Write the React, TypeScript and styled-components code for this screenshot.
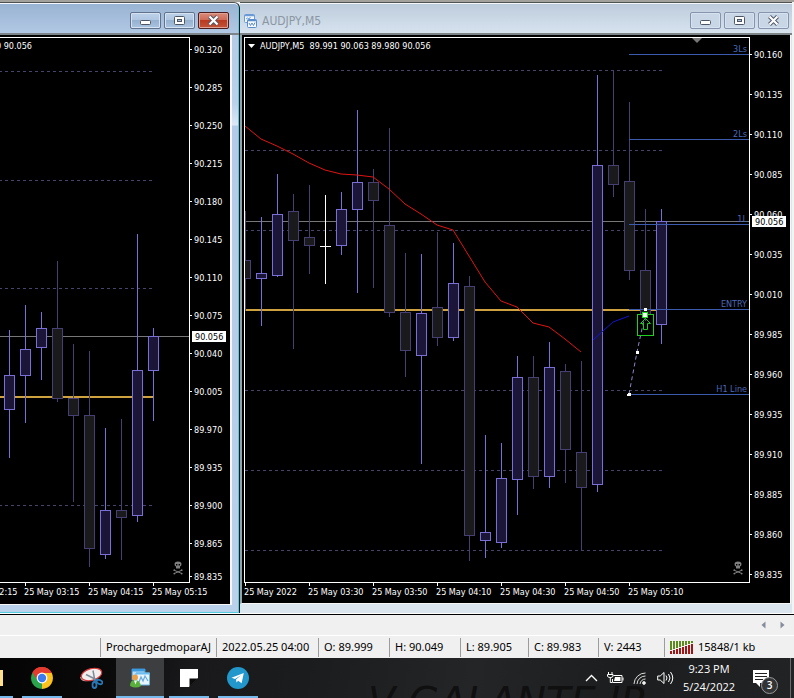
import React from 'react';
import styled, { createGlobalStyle } from 'styled-components';

const uiFont = '"DejaVu Sans Condensed", "DejaVu Sans", sans-serif';
const shellFont = '"Open Sans", "Noto Sans", sans-serif';

const GlobalStyle = createGlobalStyle`
  *, *::before, *::after { box-sizing: border-box; }
  html, body, #root { margin: 0; height: 100%; }
  body { background: #f0f0f0; font-family: ${uiFont}; overflow: hidden; }
  button { padding: 0; margin: 0; border: 0; background: none; font: inherit; color: inherit; }
`;

/* ---------- shell ---------- */

const Page = styled.div`
  display: flex;
  flex-direction: column;
  min-height: 100%;
`;

const Workspace = styled.main`
  display: flex;
  align-items: stretch;
  overflow: hidden;
  background: #f4f4f4;
  border-top: 2px solid #a3a19b;
  padding-right: 2px;
`;

const WindowFrame = styled.section<{ $active?: boolean }>`
  display: flex;
  flex-direction: column;
  min-width: 0;
  flex: ${p => (p.$active ? '0 0 auto' : '1 1 0')};
  background: ${p =>
    p.$active
      ? 'linear-gradient(#98b3d2 0, #b5cbe6 34px, #b9d1ea 100px, #dbe8f8 122px, #b3cbe8 123px, #b9d1ea 100%)'
      : 'linear-gradient(#bccbdb 0, #d9e4f0 32px, #dbe5ee 100%)'};
  border-top: 1px solid #4f5453;
  border-right: ${p => (p.$active ? '1px solid #101c20' : '0')};
  border-bottom: 1px solid ${p => (p.$active ? '#101010' : '#5b6468')};
  border-radius: ${p => (p.$active ? '0 6px 0 0' : '0')};
  box-shadow: ${p => (p.$active ? 'inset -1px -1px 0 #55cbe0, inset 0 1px 0 #f4f8fc' : 'inset 0 1px 0 #f4f8fc')};
`;

const TitleBar = styled.header<{ $active?: boolean }>`
  display: flex;
  align-items: center;
  gap: 2px;
  height: 32px;
  padding: ${p => (p.$active ? '5px 10px 0 0' : '5px 3px 0 4px')};
  border-bottom: 2px solid #7d8488;
`;

const WindowTitle = styled.h2`
  flex: 1;
  margin: 0 0 0 3px;
  font: 400 12px/16px ${uiFont};
  color: #8c97a3;
`;

const Caption = styled.button<{ $kind: 'active' | 'close' | 'idle' }>`
  display: grid;
  place-items: center;
  width: 31px;
  height: 17px;
  border-radius: 2px;
  border: 1px solid ${p => (p.$kind === 'close' ? '#4b1c1c' : p.$kind === 'active' ? '#61728c' : '#8793aa')};
  box-shadow: inset 0 0 0 1px ${p => (p.$kind === 'close' ? '#e0a295' : '#d5e2f1')};
  background: ${p =>
    p.$kind === 'close'
      ? 'linear-gradient(#d98b7a 0, #cf6b56 45%, #b93a20 50%, #c2553a 100%)'
      : p.$kind === 'active'
        ? 'linear-gradient(#bdd0e8 0, #b0c7e2 45%, #97b1d0 50%, #a9c3e0 100%)'
        : '#c9d6e6'};
`;

const CaptionGroup = styled.div`
  display: flex;
  gap: 3px;
  margin-left: auto;
`;

const Client = styled.div<{ $active?: boolean }>`
  display: flex;
  flex: 1;
  overflow: hidden;
  background: #000;
  border-bottom: 1px solid #f6f6f6;
  border-right: ${p => (p.$active ? '2px' : '1px')} solid #f6f6f6;
  border-left: ${p => (p.$active ? '0' : '2px solid #93a3a5')};
  margin: ${p => (p.$active ? '0 7px 8px 0' : '0 1px 9px 0')};
`;

const ChartSvg = styled.svg`
  display: block;
  flex: none;
  shape-rendering: crispEdges;
  text { font-family: ${uiFont}; font-size: 9px; fill: #fff; }
`;

/* ---------- chart ---------- */

type Candle = [x: number, high: number, top: number, bottom: number, low: number, up: 0 | 1];

function Candles({ data }: { data: Candle[] }) {
  return (
    <>
      {data.map(([x, high, top, bottom, low, up]) => {
        const line = up ? '#7a6fd6' : '#453f73';
        return (
          <g key={x}>
            <rect x={x} y={high} width={1} height={low + 1 - high} fill={line} />
            <rect x={x - 4.5} y={top + 0.5} width={10} height={bottom - top} fill={up ? '#1b1638' : '#1a1a1c'} stroke={line} />
          </g>
        );
      })}
    </>
  );
}

function Frame(p: { left: number; right: number; prices: [string, number][]; times: [string, number][]; ticks: number[]; gridEnd: number; grid: number[] }) {
  return (
    <>
      {p.grid.map(y => (
        <line key={y} x1={p.left + 1} x2={p.gridEnd} y1={y + 0.5} y2={y + 0.5} stroke="#45456a" strokeDasharray="3 3" />
      ))}
      <path d={`M${p.left + 0.5} 37.5H${p.right + 0.5}V582.5H${p.left + 0.5}Z`} fill="none" stroke="#fff" />
      {p.prices.map(([label, y]) => (
        <g key={label}>
          <line x1={p.right} x2={p.right + 3} y1={y + 0.5} y2={y + 0.5} stroke="#fff" />
          <text x={p.right + 5} y={y + 4}>{label}</text>
        </g>
      ))}
      {p.ticks.map(x => (
        <line key={x} x1={x + 0.5} x2={x + 0.5} y1={582} y2={586} stroke="#fff" />
      ))}
      {p.times.map(([label, x]) => (
        <text key={label} x={x} y={595}>{label}</text>
      ))}
    </>
  );
}

function CurrentPrice({ x, y }: { x: number; y: number }) {
  return (
    <g>
      <rect x={x} y={y - 5} width={34} height={11} fill="#fff" />
      <text x={x + 3} y={y + 4} style={{ fill: '#000' }}>90.056</text>
    </g>
  );
}

function Skull({ x, y }: { x: number; y: number }) {
  return (
    <g transform={`translate(${x} ${y})`} shapeRendering="auto" fill="#808080" stroke="none">
      <path d="M-3.500 -5Q-3.500 -7.500 0 -7.500T3.500 -5Q3.500 -3 2 -2.500V-.5H-2V-2.500Q-3.500 -3 -3.500 -5Z" />
      <path d="M-2 -5h1.400v1.400H-2zM.6 -5H2v1.400H.6z" fill="#000" />
      <path d="M-4 1.200L4 4.600M4 1.200L-4 4.600" stroke="#808080" strokeWidth="1" />
      <circle cx="-3.700" cy="1.200" r=".9" /><circle cx="3.700" cy="1.200" r=".9" />
      <circle cx="-3.700" cy="4.600" r=".9" /><circle cx="3.700" cy="4.600" r=".9" />
    </g>
  );
}

const leftCandles: Candle[] = [
  [9, 330, 375, 409, 457, 1], [25, 305, 349, 375, 422, 1], [41, 312, 328, 347, 379, 1],
  [57, 261, 328, 398, 401, 0], [73, 344, 398, 415, 501, 0], [89, 351, 415, 548, 566, 0],
  [105, 428, 510, 554, 558, 1], [121, 419, 510, 517, 559, 0], [137, 234, 370, 515, 521, 1],
  [153, 328, 336, 370, 420, 1],
];
const leftPrices: [string, number][] = [
  ['90.320', 49], ['90.285', 87], ['90.250', 125], ['90.215', 163], ['90.180', 201],
  ['90.145', 239], ['90.110', 277], ['90.075', 315], ['90.040', 353], ['90.005', 391],
  ['89.970', 429], ['89.935', 467], ['89.900', 505], ['89.865', 543], ['89.835', 576],
];

const rightCandles: Candle[] = [
  [245, 211, 260, 278, 310, 0], [261, 217, 273, 278, 325, 1], [277, 174, 214, 275, 276, 1],
  [293, 194, 211, 240, 348, 0], [309, 185, 237, 245, 273, 0],
  [341, 192, 209, 245, 254, 1], [357, 110, 182, 209, 292, 1], [373, 169, 182, 200, 287, 0],
  [389, 128, 225, 312, 316, 0], [405, 253, 312, 350, 376, 0], [421, 254, 313, 355, 463, 1],
  [437, 232, 307, 337, 345, 0], [453, 243, 283, 337, 340, 1], [469, 276, 286, 535, 560, 0],
  [485, 435, 532, 540, 557, 1], [501, 443, 478, 542, 547, 1], [517, 356, 377, 479, 514, 1],
  [533, 356, 377, 476, 488, 0], [549, 342, 367, 476, 487, 1], [565, 364, 371, 449, 482, 0],
  [581, 361, 452, 487, 549, 0], [597, 75, 165, 484, 491, 1], [613, 70, 165, 184, 196, 0],
  [629, 102, 181, 270, 279, 0], [645, 209, 270, 314, 320, 0], [661, 209, 221, 324, 343, 1],
];
const rightPrices: [string, number][] = [
  ['90.160', 54], ['90.135', 94], ['90.110', 134], ['90.085', 174], ['90.060', 214],
  ['90.035', 254], ['90.010', 294], ['89.985', 334], ['89.960', 374], ['89.935', 414],
  ['89.910', 454], ['89.885', 494], ['89.860', 534], ['89.835', 574],
];
const levels: [string, number][] = [['3Ls', 54], ['2Ls', 139], ['1L', 224], ['ENTRY', 309], ['H1 Line', 394]];

function LeftChart() {
  return (
    <ChartSvg width={230} height={568} viewBox="0 35 230 568" role="img" aria-label="Price chart">
      <Frame left={-20} right={189} prices={leftPrices} gridEnd={154} grid={[71, 180, 288, 505]}
        ticks={[25, 89, 153]}
        times={[['25 May 02:15', -38], ['25 May 03:15', 24], ['25 May 04:15', 88], ['25 May 05:15', 152]]} />
      <text x={32} y={49} textAnchor="end">AUDJPY,M15  89.991 90.063 89.980 90.056</text>
      <line x1={0} x2={189} y1={336.5} y2={336.5} stroke="#777" />
      <rect x={0} y={396} width={153} height={2} fill="#cfa240" />
      <Candles data={leftCandles} />
      <CurrentPrice x={192} y={336} />
      <Skull x={178} y={569} />
    </ChartSvg>
  );
}

function RightChart() {
  return (
    <ChartSvg width={548} height={568} viewBox="242 35 548 568" role="img" aria-label="AUDJPY,M5 price chart">
      <clipPath id="plot"><rect x={245} y={38} width={504} height={544} /></clipPath>
      <Frame left={244} right={749} prices={rightPrices} gridEnd={662} grid={[70, 150, 230, 390, 470, 550]}
        ticks={[245, 309, 373, 437, 501, 565, 629]}
        times={[['25 May 2022', 244], ['25 May 03:30', 308], ['25 May 03:50', 372], ['25 May 04:10', 436], ['25 May 04:30', 500], ['25 May 04:50', 564], ['25 May 05:10', 628]]} />
      <path d="M248 44h7l-3.500 4z" fill="#fff" shapeRendering="auto" />
      <text x={260} y={49} style={{ whiteSpace: 'pre' }}>AUDJPY,M5  89.991 90.063 89.980 90.056</text>
      <path d="M692 38h10l-5 5z" fill="#777" shapeRendering="auto" />
      <line x1={245} x2={749} y1={221.5} y2={221.5} stroke="#777" />
      <rect x={246} y={309} width={384} height={2} fill="#cfa240" />
      <rect x={630} y={310} width={27} height={1} fill="#cfa240" />
      <g clipPath="url(#plot)"><Candles data={rightCandles} /></g>
      <path d="M325.500 195V284M320 246.500H331" stroke="#fff" />
      <path d="M245 126L261 139L277 146L293 154L309 163L325 170L341 174L357 175L373 177L389 189L405 204L421 214L437 225L453 230L469 256L485 282L501 301L517 307L533 323L549 327L565 339L581 352" fill="none" stroke="#e01414" strokeWidth={1} shapeRendering="auto" />
      <path d="M593 340L603 331L613 322L629 316" fill="none" stroke="#1414d0" strokeWidth={1} shapeRendering="auto" />
      {levels.map(([label, y]) => (
        <g key={label}>
          <line x1={629} x2={749} y1={y + 0.5} y2={y + 0.5} stroke="#3c5aae" />
          <text x={747} y={y - 2} textAnchor="end" style={{ fill: '#4c68b8' }}>{label}</text>
        </g>
      ))}
      <path d="M629 394L637 352L645 315" fill="none" stroke="#8b86c8" strokeDasharray="4 3" shapeRendering="auto" />
      <rect x={637.5} y={314.5} width={16} height={21} fill="none" stroke="#20d020" />
      <path d="M645.500 318.500L650.500 323.500H647.500V329.500H643.500V323.500H640.500Z" fill="none" stroke="#22c822" shapeRendering="auto" />
      <rect x={642.5} y={312.5} width={5} height={5} fill="#fff" stroke="#20e020" />
      <g fill="#fff">
        <rect x={644} y={308} width={3} height={3} />
        <rect x={636} y={351} width={3} height={3} />
        <path d="M627 396l1-3h3v3z" />
      </g>
      <CurrentPrice x={752} y={221} />
      <Skull x={738} y={569} />
    </ChartSvg>
  );
}

/* ---------- window captions ---------- */

function CaptionIcon({ kind }: { kind: 'min' | 'max' | 'close' }) {
  return (
    <svg width="15" height="11" viewBox="0 0 15 11" aria-hidden="true">
      {kind === 'min' && <rect x="2.500" y="5.500" width="10" height="4" rx="1" fill="#fff" stroke="#4d5665" />}
      {kind === 'max' && (
        <>
          <rect x="2.500" y="1.500" width="10" height="8" rx="1" fill="#fff" stroke="#4d5665" />
          <rect x="5.500" y="4.500" width="4" height="2" fill="#a9bedb" stroke="#4d5665" />
        </>
      )}
      {kind === 'close' && (
        <>
          <path d="M3.500 1.500L11.500 9.500M11.500 1.500L3.500 9.500" stroke="#4d5665" strokeWidth="4" />
          <path d="M3.500 1.500L11.500 9.500M11.500 1.500L3.500 9.500" stroke="#fff" strokeWidth="2.200" />
        </>
      )}
    </svg>
  );
}

function Captions({ active }: { active?: boolean }) {
  return (
    <CaptionGroup>
      <Caption $kind={active ? 'active' : 'idle'} aria-label="Minimize"><CaptionIcon kind="min" /></Caption>
      <Caption $kind={active ? 'active' : 'idle'} aria-label="Maximize"><CaptionIcon kind="max" /></Caption>
      <Caption $kind={active ? 'close' : 'idle'} aria-label="Close"><CaptionIcon kind="close" /></Caption>
    </CaptionGroup>
  );
}

function ChartWindowIcon() {
  return (
    <svg width="13" height="14" viewBox="0 0 13 14" aria-hidden="true">
      <rect x=".5" y=".5" width="10" height="8" rx="1" fill="#f4f9ff" stroke="#6a9bd6" />
      <path d="M.5 1.500H10.500" stroke="#6a9bd6" strokeWidth="1.500" />
      <path d="M2 5l1.500-1L5 5l1.500-2" fill="none" stroke="#6a9bd6" />
      <rect x="3.500" y="5.500" width="9" height="8" rx="1" fill="#f4f9ff" stroke="#5a8ccc" />
      <path d="M3.500 6.500H12.500" stroke="#5a8ccc" strokeWidth="1.500" />
      <path d="M5 9l1.500 2.500L8 9l1.500 2.500L11 8.500" fill="none" stroke="#5a8ccc" />
    </svg>
  );
}

/* ---------- status bar ---------- */

const TabStrip = styled.nav`
  display: flex;
  justify-content: flex-end;
  align-items: center;
  gap: 12px;
  height: 21px;
  padding-right: 8px;
  background: #f0f0f0;
  border-top: 1px solid #000;
  box-shadow: 0 -1px 0 #fff;
  z-index: 1;
`;

const ScrollButton = styled.button`
  display: grid;
  place-items: center;
  width: 7px;
  height: 16px;
`;

const StatusBar = styled.footer`
  display: flex;
  align-items: center;
  height: 23px;
  border-top: 1px solid #fff;
  background: #f0f0f0;
  font: 400 11px/20px "Noto Sans", sans-serif;
  color: #000;
`;

const StatusCell = styled.div<{ $width?: number }>`
  display: flex;
  align-items: center;
  gap: 4px;
  flex: ${p => (p.$width ? `0 0 ${p.$width}px` : '1')};
  height: 19px;
  padding-left: 5px;
  border-left: 1px solid #9c9c9c;
  white-space: nowrap;
`;

const StatusLead = styled.div`
  width: 100px;
`;

function Traffic() {
  return (
    <svg width="24" height="13" viewBox="0 0 24 13" aria-hidden="true" shapeRendering="crispEdges">
      {Array.from({ length: 8 }, (_, i) => (
        <g key={i}>
          <rect x={i * 3} y={0} width={2} height={9 - i} fill="#5d8a1c" />
          <rect x={i * 3} y={10 - i} width={2} height={3 + i} fill="#a01616" />
        </g>
      ))}
    </svg>
  );
}

/* ---------- taskbar ---------- */

const Taskbar = styled.div`
  position: relative;
  display: flex;
  align-items: stretch;
  gap: 1px;
  height: 40px;
  overflow: hidden;
  background: linear-gradient(100deg, #040404 0, #0a0a0b 110px, #19191b 190px, #1b1c1d 300px, #242526 470px, #1c1d1e 620px, #222324 100%);
`;

const Watermark = styled.div`
  position: absolute;
  left: 368px;
  top: 24px;
  font: italic 400 40px/40px "DejaVu Sans", sans-serif;
  color: #101011;
  white-space: nowrap;
`;

const TaskApp = styled.button<{ $width: number; $active?: boolean; $line?: number }>`
  display: grid;
  place-items: center;
  flex: 0 0 ${p => p.$width}px;
  background: linear-gradient(#76b9ed, #76b9ed) center bottom / ${p => p.$line || 0}px 2px no-repeat
    ${p => (p.$active ? '#3d3e40' : 'transparent')};
`;

const FolderApp = styled(TaskApp)`
  justify-items: start;
  background-position: left bottom;
`;

const Tray = styled.div`
  position: relative;
  display: flex;
  align-items: center;
  margin-left: auto;
  gap: 8px;
  color: #fff;
`;

const TrayButton = styled.button<{ $width: number }>`
  display: grid;
  place-items: center;
  width: ${p => p.$width}px;
  height: 40px;
`;

const Clock = styled.time`
  width: 54px;
  text-align: center;
  font: 400 11px/18px ${shellFont};
  color: #fff;
`;

const Notices = styled.button`
  position: relative;
  display: grid;
  place-items: center start;
  width: 26px;
  height: 40px;
  margin: 0 4px 0 8px;
`;

const Count = styled.span`
  position: absolute;
  right: 0;
  bottom: 4px;
  width: 17px;
  height: 17px;
  border: 1px solid #999;
  border-radius: 50%;
  background: #333436;
  font: 600 10px/15px ${shellFont};
  color: #fff;
`;

const ShowDesktop = styled.button`
  width: 4px;
  height: 40px;
  border-left: 1px solid #6a6a6a;
`;

function FolderIcon() {
  return <svg width="4" height="16" viewBox="0 0 4 16"><path d="M0 0h3v16H0z" fill="#ffe08a" /></svg>;
}
function ChromeIcon() {
  return (
    <svg width="22" height="22" viewBox="0 0 22 22">
      <path d="M11 11L1.500 5.500A11 11 0 0 1 20.500 5.500Z" fill="#e33b2e" />
      <path d="M11 11L20.500 5.500A11 11 0 0 1 11 22Z" fill="#fcc31e" />
      <path d="M11 11L11 22A11 11 0 0 1 1.500 5.500Z" fill="#2ba24c" />
      <path d="M11 6H20.800A11 11 0 0 0 1.500 5.500L6.500 13.500Z" fill="#e33b2e" />
      <path d="M15.300 13.500L20.800 6H11Z" fill="#fcc31e" />
      <circle cx="11" cy="11" r="5.400" fill="#fff" /><circle cx="11" cy="11" r="4.200" fill="#3b7cf0" />
    </svg>
  );
}
function SnipIcon() {
  return (
    <svg width="24" height="22" viewBox="0 0 24 22">
      <path d="M1 10c1 5 6 5 11 3L8 9z" fill="#b9b4b4" />
      <ellipse cx="12.500" cy="7.500" rx="10.500" ry="5.800" transform="rotate(-15 12.500 7.500)" fill="#f3eeee" stroke="#d83b3b" strokeWidth="1.200" />
      <path d="M7 7.500l11 5.500M14 3.500l2 11" stroke="#7d8c9a" strokeWidth="1.500" />
      <ellipse cx="15.500" cy="18" rx="2" ry="3" fill="none" stroke="#2878b5" strokeWidth="1.800" />
      <ellipse cx="20.500" cy="15" rx="3" ry="1.900" transform="rotate(25 20.500 15)" fill="none" stroke="#2878b5" strokeWidth="1.800" />
      <path d="M14.500 14.500l4-2" stroke="#2878b5" strokeWidth="1.800" />
    </svg>
  );
}
function TraderIcon() {
  return (
    <svg width="20" height="20" viewBox="0 0 20 20">
      <path d="M2 1h13v11H2z" fill="#bfe0f6" stroke="#3b8fce" /><path d="M2 1h13v2.500H2z" fill="#3b9ae0" />
      <path d="M6 5h13.500v12H6z" fill="#e8f5fd" stroke="#6ab2e2" /><path d="M6 4.500h13.500v2H6z" fill="#6cbcf0" />
      <path d="M9 14l2-5 2 4 2-5 3 5" fill="none" stroke="#6aa9dc" strokeWidth="1.200" />
      <circle cx="5" cy="9.500" r="3" fill="#eaa14c" /><path d="M0 18q0-6 5-6t6 6q-5 3-11 0z" fill="#59b13b" /><path d="M4 12.500h3l-1.500 4z" fill="#fff" />
    </svg>
  );
}
function NotesIcon() {
  return (
    <svg width="18" height="18" viewBox="0 0 18 18">
      <path d="M0 0H18V9L9 18H0z" fill="#fff" />
      <path d="M9.500 9.500H18L9.500 18z" fill="#0c0c0d" />
    </svg>
  );
}
function TelegramIcon() {
  return (
    <svg width="22" height="22" viewBox="0 0 22 22">
      <circle cx="11" cy="11" r="11" fill="#2197cb" />
      <path d="M4.500 10.800L16.800 6L14.600 16.300L11.200 13.700L9.500 15.400L9 12.400L14 8.200L8 12z" fill="#fff" />
    </svg>
  );
}

function TrayIcons() {
  return (
    <>
      <TrayButton $width={13} aria-label="Show hidden icons">
        <svg width="13" height="8" viewBox="0 0 13 8"><path d="M1 7l5.500-5.500L12 7" fill="none" stroke="#fff" strokeWidth="1.300" /></svg>
      </TrayButton>
      <TrayButton $width={18} aria-label="Battery">
        <svg width="17" height="12" viewBox="0 0 17 12">
          <path d="M1.500 0v3M5 0v3M.500 2.500h5.500v1.500q0 1.500-2.700 1.500T.500 4zM3.300 5v5.500H5" fill="none" stroke="#fff" />
          <path d="M6.500 3.500h8.500v7H5.500V7" fill="none" stroke="#fff" /><path d="M8 5h5.500v4H7z" fill="#fff" /><path d="M15.500 5.500h1v3h-1z" fill="#fff" />
        </svg>
      </TrayButton>
      <TrayButton $width={16} aria-label="Network">
        <svg width="14" height="13" viewBox="0 0 14 13" fill="none" stroke="#ddd">
          <path d="M1 12A11.500 11.500 0 0 1 12.500 1M4 12A8.500 8.500 0 0 1 12.500 4M7 12A5.500 5.500 0 0 1 12.500 7" /><circle cx="11" cy="11" r="1.400" fill="#fff" />
        </svg>
      </TrayButton>
      <TrayButton $width={18} aria-label="Volume">
        <svg width="17" height="14" viewBox="0 0 17 14" fill="none" stroke="#fff">
          <path d="M.700 5h2.500L7 1.500v11L3.200 9H.700zM9 4.500q2 2.500 0 5M11.500 3q3 4 0 8M13.500 1q4.500 6 0 12" />
        </svg>
      </TrayButton>
    </>
  );
}

export default function App() {
  return (
    <>
      <GlobalStyle />
      <Page>
        <Workspace>
          <WindowFrame $active aria-label="Active chart">
            <TitleBar $active><Captions active /></TitleBar>
            <Client $active><LeftChart /></Client>
          </WindowFrame>
          <WindowFrame aria-label="AUDJPY,M5">
            <TitleBar>
              <ChartWindowIcon />
              <WindowTitle>AUDJPY,M5</WindowTitle>
              <Captions />
            </TitleBar>
            <Client><RightChart /></Client>
          </WindowFrame>
        </Workspace>
        <TabStrip aria-label="Chart tabs">
          <ScrollButton aria-label="Scroll left"><svg width="5" height="8" viewBox="0 0 5 8"><path d="M4.500 .5v7L.5 4z" fill="#858c9c" /></svg></ScrollButton>
          <ScrollButton aria-label="Scroll right"><svg width="5" height="8" viewBox="0 0 5 8"><path d="M.5 .5v7l4-3.500z" fill="#858c9c" /></svg></ScrollButton>
        </TabStrip>
        <StatusBar>
          <StatusLead />
          <StatusCell $width={116}>ProchargedmoparAJ</StatusCell>
          <StatusCell $width={102}>2022.05.25 04:00</StatusCell>
          <StatusCell $width={71}>O: 89.999</StatusCell>
          <StatusCell $width={71}>H: 90.049</StatusCell>
          <StatusCell $width={68}>L: 89.905</StatusCell>
          <StatusCell $width={70}>C: 89.983</StatusCell>
          <StatusCell $width={66}>V: 2443</StatusCell>
          <StatusCell><Traffic />15848/1 kb</StatusCell>
        </StatusBar>
        <Taskbar>
          <Watermark aria-hidden="true">V GALANTE JR</Watermark>
          <FolderApp $width={17} $line={13} aria-label="File Explorer"><FolderIcon /></FolderApp>
          <TaskApp $width={48} $line={40} aria-label="Chrome"><ChromeIcon /></TaskApp>
          <TaskApp $width={48} aria-label="Snipping Tool"><SnipIcon /></TaskApp>
          <TaskApp $width={48} $active $line={48} aria-label="MetaTrader"><TraderIcon /></TaskApp>
          <TaskApp $width={48} $line={40} aria-label="Sticky Notes"><NotesIcon /></TaskApp>
          <TaskApp $width={48} $line={40} aria-label="Telegram"><TelegramIcon /></TaskApp>
          <Tray>
            <TrayIcons />
            <Clock>9:23 PM<br />5/24/2022</Clock>
            <Notices aria-label="Notifications">
              <svg width="18" height="17" viewBox="0 0 18 17"><path d="M1 0h16v13h-9v4l-4-4H1z" fill="#fff" /><path d="M3 3.500h12M3 6.500h12M3 9.500h8" stroke="#222" /></svg>
              <Count>3</Count>
            </Notices>
            <ShowDesktop aria-label="Show desktop" />
          </Tray>
        </Taskbar>
      </Page>
    </>
  );
}
